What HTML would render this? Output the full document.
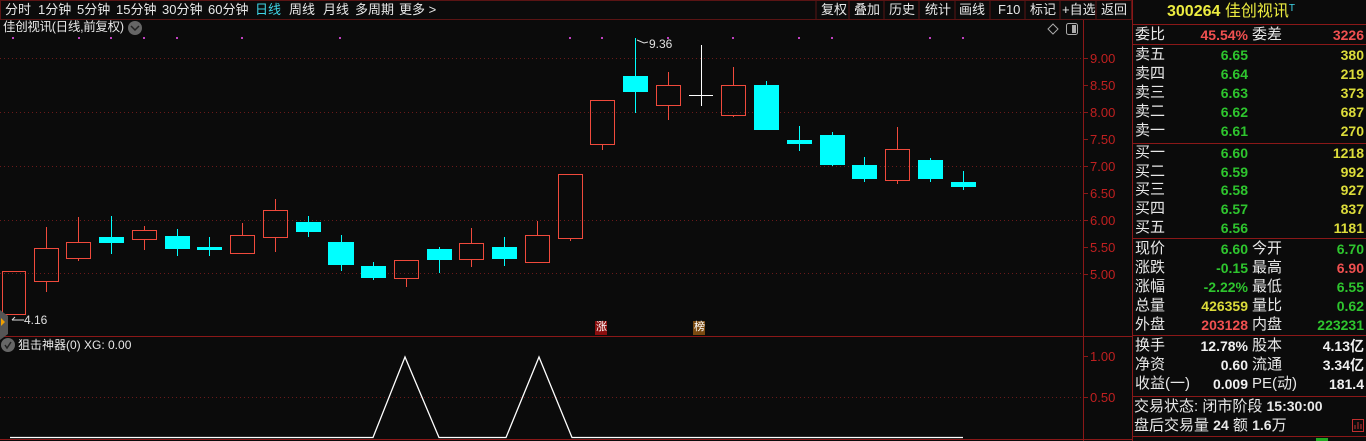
<!DOCTYPE html>
<html><head><meta charset="utf-8"><style>
*{margin:0;padding:0;box-sizing:border-box}
body{width:1366px;height:441px;background:#0b0b0b;overflow:hidden;position:relative;font-family:"Liberation Sans","Noto Sans CJK SC",sans-serif;color:#e8e8e8}
.a{position:absolute;white-space:nowrap;line-height:1}
.nav{font-size:13px;top:3px}
.rp{font-size:15px}
.v{font-weight:bold;font-size:14px;text-align:right}
.g{color:#2ec52e}.y{color:#dcdc3a}.r{color:#f05050}.w{color:#f0f0f0}
</style></head><body>
<svg width="1366" height="441" style="position:absolute;left:0;top:0" xmlns="http://www.w3.org/2000/svg">
<rect x="0.5" y="0.5" width="1131" height="19" fill="none" stroke="#5a1414"/>
<g stroke="#5a1414"><line x1="816" y1="0" x2="816" y2="20"/><line x1="849" y1="0" x2="849" y2="20"/><line x1="884" y1="0" x2="884" y2="20"/><line x1="919" y1="0" x2="919" y2="20"/><line x1="955" y1="0" x2="955" y2="20"/><line x1="990" y1="0" x2="990" y2="20"/><line x1="1025" y1="0" x2="1025" y2="20"/><line x1="1060" y1="0" x2="1060" y2="20"/><line x1="1096" y1="0" x2="1096" y2="20"/></g>
<line x1="1083.5" y1="20" x2="1083.5" y2="441" stroke="#8a1818"/>
<line x1="1132.5" y1="0" x2="1132.5" y2="441" stroke="#8a1818"/>
<line x1="0" y1="336.5" x2="1132" y2="336.5" stroke="#8a1818"/>
<line x1="0" y1="439.5" x2="1132" y2="439.5" stroke="#8a1818"/>
<g stroke="#8a1818"><line x1="1133" y1="24.5" x2="1366" y2="24.5"/><line x1="1133" y1="44.5" x2="1366" y2="44.5"/><line x1="1133" y1="143.5" x2="1366" y2="143.5"/><line x1="1133" y1="238.5" x2="1366" y2="238.5"/><line x1="1133" y1="335.5" x2="1366" y2="335.5"/><line x1="1133" y1="396.5" x2="1366" y2="396.5"/><line x1="1133" y1="436.5" x2="1366" y2="436.5"/></g>
<g stroke="#6a1a1a" stroke-dasharray="1,3"><line x1="0" y1="58.5" x2="1083" y2="58.5"/><line x1="0" y1="112.5" x2="1083" y2="112.5"/><line x1="0" y1="166.5" x2="1083" y2="166.5"/><line x1="0" y1="220.5" x2="1083" y2="220.5"/><line x1="0" y1="273.5" x2="1083" y2="273.5"/><line x1="0" y1="397.5" x2="1083" y2="397.5"/></g>
<g stroke="#8a1818"><line x1="1083" y1="58.5" x2="1088" y2="58.5"/><line x1="1083" y1="85.5" x2="1088" y2="85.5"/><line x1="1083" y1="112.5" x2="1088" y2="112.5"/><line x1="1083" y1="139.5" x2="1088" y2="139.5"/><line x1="1083" y1="166.5" x2="1088" y2="166.5"/><line x1="1083" y1="193.5" x2="1088" y2="193.5"/><line x1="1083" y1="220.5" x2="1088" y2="220.5"/><line x1="1083" y1="247.5" x2="1088" y2="247.5"/><line x1="1083" y1="274.5" x2="1088" y2="274.5"/><line x1="1083" y1="356.5" x2="1088" y2="356.5"/><line x1="1083" y1="397.5" x2="1088" y2="397.5"/></g>
<g fill="#c02020" font-size="13" font-family="Liberation Sans"><text x="1090" y="63">9.00</text><text x="1090" y="90">8.50</text><text x="1090" y="117">8.00</text><text x="1090" y="144">7.50</text><text x="1090" y="171">7.00</text><text x="1090" y="198">6.50</text><text x="1090" y="225">6.00</text><text x="1090" y="252">5.50</text><text x="1090" y="279">5.00</text><text x="1090" y="361">1.00</text><text x="1090" y="402">0.50</text></g>
<g fill="#c040c0"><rect x="12" y="37" width="2" height="2"/><rect x="78" y="37" width="2" height="2"/><rect x="110" y="37" width="2" height="2"/><rect x="143" y="37" width="2" height="2"/><rect x="176" y="37" width="2" height="2"/><rect x="241" y="37" width="2" height="2"/><rect x="339" y="37" width="2" height="2"/><rect x="569" y="37" width="2" height="2"/><rect x="601" y="37" width="2" height="2"/><rect x="667" y="37" width="2" height="2"/><rect x="732" y="37" width="2" height="2"/><rect x="798" y="37" width="2" height="2"/><rect x="831" y="37" width="2" height="2"/><rect x="929" y="37" width="2" height="2"/><rect x="962" y="37" width="2" height="2"/></g>
<g stroke="#f04a3c" fill="none" stroke-width="1">
<rect x="2.5" y="271.5" width="23" height="43"/>
<line x1="46.5" y1="227" x2="46.5" y2="248"/><line x1="46.5" y1="281" x2="46.5" y2="292"/><rect x="34.5" y="248.5" width="24" height="33"/>
<line x1="78.5" y1="217" x2="78.5" y2="242"/><line x1="78.5" y1="258" x2="78.5" y2="261"/><rect x="66.5" y="242.5" width="24" height="16"/>
<line x1="144.5" y1="226" x2="144.5" y2="230"/><line x1="144.5" y1="239" x2="144.5" y2="250"/><rect x="132.5" y="230.5" width="24" height="9"/>
<line x1="242.5" y1="223" x2="242.5" y2="235"/><rect x="230.5" y="235.5" width="24" height="18"/>
<line x1="275.5" y1="199" x2="275.5" y2="210"/><line x1="275.5" y1="237" x2="275.5" y2="252"/><rect x="263.5" y="210.5" width="24" height="27"/>
<line x1="406.5" y1="278" x2="406.5" y2="287"/><rect x="394.5" y="260.5" width="24" height="18"/>
<line x1="471.5" y1="228" x2="471.5" y2="243"/><line x1="471.5" y1="259" x2="471.5" y2="267"/><rect x="459.5" y="243.5" width="24" height="16"/>
<line x1="537.5" y1="221" x2="537.5" y2="235"/><rect x="525.5" y="235.5" width="24" height="27"/>
<line x1="570.5" y1="238" x2="570.5" y2="241"/><rect x="558.5" y="174.5" width="24" height="64"/>
<line x1="602.5" y1="144" x2="602.5" y2="150"/><rect x="590.5" y="100.5" width="24" height="44"/>
<line x1="668.5" y1="72" x2="668.5" y2="85"/><line x1="668.5" y1="105" x2="668.5" y2="120"/><rect x="656.5" y="85.5" width="24" height="20"/>
<line x1="733.5" y1="67" x2="733.5" y2="85"/><line x1="733.5" y1="115" x2="733.5" y2="117"/><rect x="721.5" y="85.5" width="24" height="30"/>
<line x1="897.5" y1="127" x2="897.5" y2="149"/><line x1="897.5" y1="180" x2="897.5" y2="184"/><rect x="885.5" y="149.5" width="24" height="31"/>
</g>
<g stroke="#00ffff" fill="#00ffff">
<line x1="111.5" y1="216" x2="111.5" y2="254"/><rect x="99.5" y="237.5" width="24" height="5"/>
<line x1="177.5" y1="229" x2="177.5" y2="256"/><rect x="165.5" y="236.5" width="24" height="12"/>
<line x1="209.5" y1="237" x2="209.5" y2="256"/><rect x="197.5" y="247.5" width="24" height="2"/>
<line x1="308.5" y1="216" x2="308.5" y2="237"/><rect x="296.5" y="222.5" width="24" height="9"/>
<line x1="341.5" y1="235" x2="341.5" y2="271"/><rect x="328.5" y="242.5" width="25" height="22"/>
<line x1="373.5" y1="262" x2="373.5" y2="280"/><rect x="361.5" y="266.5" width="24" height="11"/>
<line x1="439.5" y1="247" x2="439.5" y2="273"/><rect x="427.5" y="249.5" width="24" height="10"/>
<line x1="504.5" y1="237" x2="504.5" y2="266"/><rect x="492.5" y="247.5" width="24" height="11"/>
<line x1="635.5" y1="38" x2="635.5" y2="113"/><rect x="623.5" y="76.5" width="24" height="15"/>
<line x1="766.5" y1="81" x2="766.5" y2="85"/><rect x="754.5" y="85.5" width="24" height="44"/>
<line x1="799.5" y1="126" x2="799.5" y2="151"/><rect x="787.5" y="140.5" width="24" height="3"/>
<line x1="832.5" y1="132" x2="832.5" y2="166"/><rect x="820.5" y="135.5" width="24" height="29"/>
<line x1="864.5" y1="157" x2="864.5" y2="182"/><rect x="852.5" y="165.5" width="24" height="13"/>
<line x1="930.5" y1="158" x2="930.5" y2="182"/><rect x="918.5" y="160.5" width="24" height="18"/>
<line x1="963.5" y1="171" x2="963.5" y2="190"/><rect x="951.5" y="182.5" width="24" height="4"/>
</g>
<g stroke="#fff"><line x1="701.5" y1="45" x2="701.5" y2="106"/><line x1="689" y1="95.5" x2="713" y2="95.5"/></g>
<path d="M637 40 L644 43 L648 42" stroke="#ddd" fill="none"/>
<text x="649" y="48" fill="#e0e0e0" font-size="12" font-family="Liberation Sans">9.36</text>
<path d="M12 320 L24 320 M12 320 L15 317" stroke="#ddd" fill="none"/>
<text x="24" y="324" fill="#e0e0e0" font-size="12" font-family="Liberation Sans">4.16</text>
<path d="M0 310 L8 316 L8 334 L0 340Z" fill="#555"/><path d="M1 318 L5 322 L1 326Z" fill="#f0a000"/>
<rect x="595" y="321" width="12" height="14" fill="#8a0e0e"/><rect x="693" y="321" width="12" height="14" fill="#7a4a10"/>
<path d="M1053 24 L1058 29 L1053 34 L1048 29Z" stroke="#aaa" fill="none"/>
<rect x="1066.5" y="23.5" width="11" height="11" rx="2" stroke="#aaa" fill="none"/><rect x="1072" y="25" width="4" height="8" fill="#aaa"/>
<circle cx="135" cy="28" r="7" fill="#666"/><path d="M131 26 L135 30 L139 26" stroke="#222" stroke-width="1.5" fill="none"/>
<circle cx="8" cy="345" r="7" fill="#666"/><path d="M5 345 L7 348 L11 342" stroke="#222" stroke-width="1.5" fill="none"/>
<polyline points="10,437.5 373,437.5 405,357 439,437.5 506,437.5 539,357 572,437.5 963,437.5" stroke="#fff" fill="none" stroke-width="1.3"/>
<rect x="1352.5" y="419.5" width="11" height="12" stroke="#c03030" fill="none"/><path d="M1355 429V425M1358 429V422M1361 429V424" stroke="#c03030"/>
<rect x="1316" y="438" width="12" height="3" fill="#22aa22"/>
</svg>
<div class="a nav" style="left:5px">分时</div>
<div class="a nav" style="left:38px">1分钟</div>
<div class="a nav" style="left:77px">5分钟</div>
<div class="a nav" style="left:116px">15分钟</div>
<div class="a nav" style="left:162px">30分钟</div>
<div class="a nav" style="left:208px">60分钟</div>
<div class="a nav" style="left:255px;color:#3fd4e6">日线</div>
<div class="a nav" style="left:289px">周线</div>
<div class="a nav" style="left:323px">月线</div>
<div class="a nav" style="left:355px">多周期</div>
<div class="a nav" style="left:399px">更多 &gt;</div>
<div class="a nav" style="left:821px">复权</div>
<div class="a nav" style="left:854px">叠加</div>
<div class="a nav" style="left:889px">历史</div>
<div class="a nav" style="left:925px">统计</div>
<div class="a nav" style="left:959px">画线</div>
<div class="a nav" style="left:998px">F10</div>
<div class="a nav" style="left:1030px">标记</div>
<div class="a nav" style="left:1062px">+自选</div>
<div class="a nav" style="left:1101px">返回</div>
<div class="a" style="left:3px;top:21px;font-size:12.5px;letter-spacing:-0.3px">佳创视讯(日线,前复权)</div>
<div class="a" style="left:18px;top:339px;font-size:12px">狙击神器(0) XG: 0.00</div>
<div class="a" style="left:596px;top:322px;font-size:11px;color:#fff">涨</div>
<div class="a" style="left:694px;top:322px;font-size:11px;color:#fff">榜</div>
<div class="a" style="left:1167px;top:4px;font-size:16px;color:#ecec40"><b>300264</b> 佳创视讯<span style="color:#3fd4e6;font-size:10px;vertical-align:top">T</span></div>
<div id="rp"></div>
<script>
var rows=[
[35,"委比","45.54%","r","委差","3226","r"],
[55,"卖五","6.65","g","","380","y"],[74,"卖四","6.64","g","","219","y"],[93,"卖三","6.63","g","","373","y"],[112,"卖二","6.62","g","","687","y"],[131,"卖一","6.61","g","","270","y"],
[153,"买一","6.60","g","","1218","y"],[172,"买二","6.59","g","","992","y"],[190,"买三","6.58","g","","927","y"],[209,"买四","6.57","g","","837","y"],[228,"买五","6.56","g","","1181","y"],
[249,"现价","6.60","g","今开","6.70","g"],[268,"涨跌","-0.15","g","最高","6.90","r"],[287,"涨幅","-2.22%","g","最低","6.55","g"],[306,"总量","426359","y","量比","0.62","g"],[325,"外盘","203128","r","内盘","223231","g"],
[346,"换手","12.78%","w","股本","4.13亿","w"],[365,"净资","0.60","w","流通","3.34亿","w"],[384,"收益(一)","0.009","w","PE(动)","181.4","w"]];
var h="";rows.forEach(function(r){var t=r[0]-8;
h+='<div class="a rp" style="left:1135px;top:'+t+'px">'+r[1]+'</div>';
h+='<div class="a v '+r[3]+'" style="right:118px;top:'+(t+1)+'px">'+r[2]+'</div>';
if(r[4])h+='<div class="a rp" style="left:1252px;top:'+t+'px">'+r[4]+'</div>';
h+='<div class="a v '+r[6]+'" style="right:2px;top:'+(t+1)+'px">'+r[5]+'</div>';});
h+='<div class="a rp" style="left:1134px;top:399px">交易状态: 闭市阶段 <b style="font-size:14px">15:30:00</b></div>';
h+='<div class="a rp" style="left:1134px;top:418px">盘后交易量 <b style="font-size:14px">24</b> 额 <b style="font-size:14px">1.6</b>万</div>';
document.getElementById("rp").innerHTML=h;
</script>
</body></html>
